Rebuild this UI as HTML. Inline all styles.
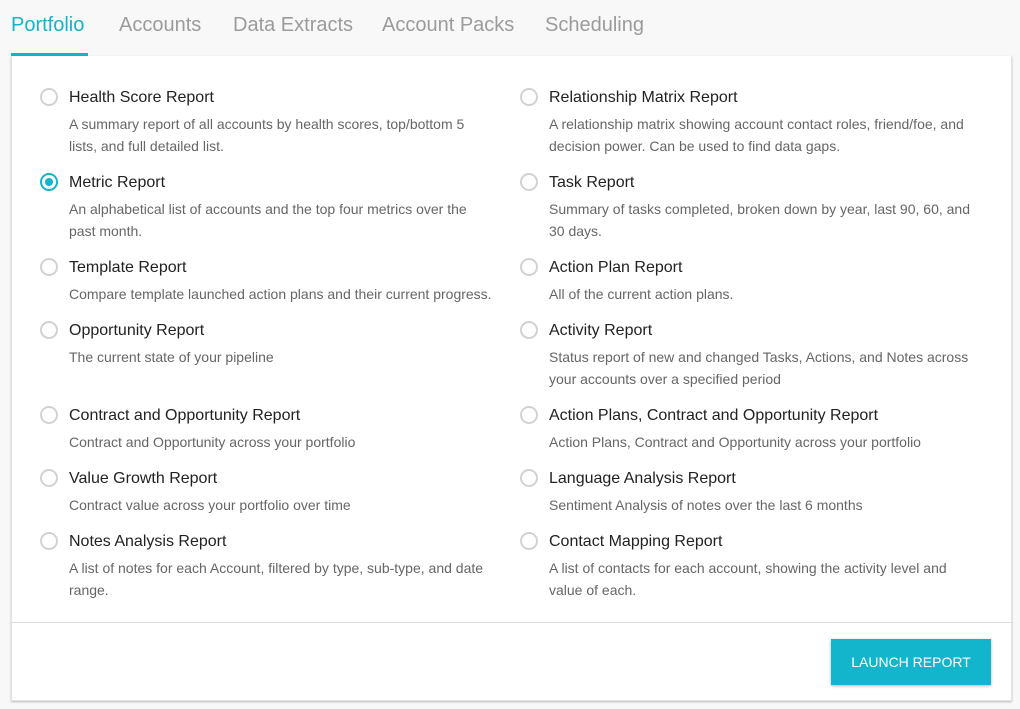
<!DOCTYPE html>
<html><head><style>
body{margin:0;width:1020px;height:709px;background:#f8f8f8;font-family:"Liberation Sans",sans-serif;position:relative;overflow:hidden}
.tab{position:absolute;top:14px;font-size:20px;color:#9b9b9b;white-space:nowrap}
.tab.a{color:#17b3cb}
.ul{position:absolute;left:11px;top:53px;width:77px;height:3px;background:#17b3cb}
.panel{position:absolute;left:11px;top:56px;width:999px;height:644px;background:#fff;border:1px solid #e3e3e3;border-top:none;box-shadow:0 1px 2px rgba(0,0,0,.25)}
.div{position:absolute;left:11px;top:622px;width:1000px;height:1px;background:#dcdcdc}
.it{position:absolute}
.r{position:absolute;left:-29px;top:0px;width:14px;height:14px;border:2px solid #d2d2d2;border-radius:50%}
.r.on{border-color:#17b3cb}
.r.on:after{content:"";position:absolute;left:3px;top:3px;width:8px;height:8px;border-radius:50%;background:#17b3cb}
.t{font-size:16px;color:#222;line-height:20px;white-space:nowrap}
.d{font-size:14px;color:#666;line-height:22px;margin-top:5px;width:412px}
.btn{position:absolute;left:831px;top:639px;width:160px;height:46px;background:#13b5cc;color:#fff;font-size:14px;text-align:center;line-height:46px;box-shadow:0 1px 3px rgba(0,0,0,.3)}
</style></head><body>
<div class="tab a" style="left:11px">Portfolio</div>
<div class="tab" style="left:119px">Accounts</div>
<div class="tab" style="left:233px">Data Extracts</div>
<div class="tab" style="left:382px">Account Packs</div>
<div class="tab" style="left:545px">Scheduling</div>
<div class="ul"></div>
<div class="panel"></div>
<div class="div"></div>

<div class="it" style="left:69px;top:88px"><div class="r"></div><div class="t">Health Score Report</div><div class="d">A summary report of all accounts by health scores, top/bottom 5 lists, and full detailed list.</div></div>
<div class="it" style="left:549px;top:88px"><div class="r"></div><div class="t">Relationship Matrix Report</div><div class="d" style="width:425px">A relationship matrix showing account contact roles, friend/foe, and decision power. Can be used to find data gaps.</div></div>

<div class="it" style="left:69px;top:173px"><div class="r on"></div><div class="t">Metric Report</div><div class="d">An alphabetical list of accounts and the top four metrics over the past month.</div></div>
<div class="it" style="left:549px;top:173px"><div class="r"></div><div class="t">Task Report</div><div class="d" style="width:430px">Summary of tasks completed, broken down by year, last 90, 60, and 30 days.</div></div>

<div class="it" style="left:69px;top:258px"><div class="r"></div><div class="t">Template Report</div><div class="d" style="width:460px">Compare template launched action plans and their current progress.</div></div>
<div class="it" style="left:549px;top:258px"><div class="r"></div><div class="t">Action Plan Report</div><div class="d">All of the current action plans.</div></div>

<div class="it" style="left:69px;top:321px"><div class="r"></div><div class="t">Opportunity Report</div><div class="d">The current state of your pipeline</div></div>
<div class="it" style="left:549px;top:321px"><div class="r"></div><div class="t">Activity Report</div><div class="d" style="width:430px">Status report of new and changed Tasks, Actions, and Notes across your accounts over a specified period</div></div>

<div class="it" style="left:69px;top:406px"><div class="r"></div><div class="t">Contract and Opportunity Report</div><div class="d">Contract and Opportunity across your portfolio</div></div>
<div class="it" style="left:549px;top:406px"><div class="r"></div><div class="t">Action Plans, Contract and Opportunity Report</div><div class="d" style="width:430px">Action Plans, Contract and Opportunity across your portfolio</div></div>

<div class="it" style="left:69px;top:469px"><div class="r"></div><div class="t">Value Growth Report</div><div class="d">Contract value across your portfolio over time</div></div>
<div class="it" style="left:549px;top:469px"><div class="r"></div><div class="t">Language Analysis Report</div><div class="d">Sentiment Analysis of notes over the last 6 months</div></div>

<div class="it" style="left:69px;top:532px"><div class="r"></div><div class="t">Notes Analysis Report</div><div class="d" style="width:430px">A list of notes for each Account, filtered by type, sub-type, and date range.</div></div>
<div class="it" style="left:549px;top:532px"><div class="r"></div><div class="t">Contact Mapping Report</div><div class="d" style="width:425px">A list of contacts for each account, showing the activity level and value of each.</div></div>

<div class="btn">LAUNCH REPORT</div>
</body></html>
